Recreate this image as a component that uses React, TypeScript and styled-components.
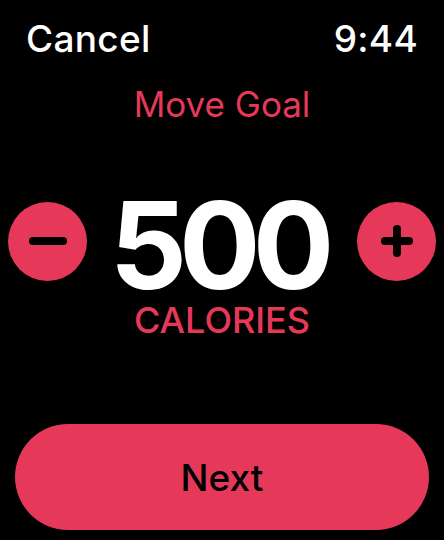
import styled, { createGlobalStyle } from "styled-components";

const accent = "#e6395a";

const GlobalStyle = createGlobalStyle`
  html, body {
    margin: 0;
    padding: 0;
    background: #000;
  }
  body {
    font-family: Inter, "Noto Sans", "Liberation Sans", sans-serif;
  }
`;

const Screen = styled.div`
  width: 444px;
  height: 540px;
  background: #000;
  display: flex;
  flex-direction: column;
  box-sizing: border-box;
  overflow: hidden;
`;

const Header = styled.div`
  display: flex;
  justify-content: space-between;
  align-items: baseline;
  padding: 20px 26px 0 26px;
  color: #fff;
  font-size: 37px;
  font-weight: 500;
  line-height: 1;
`;

const HeaderText = styled.span`
  letter-spacing: 0.3px;
`;

const Title = styled.div`
  margin-top: 30px;
  text-align: center;
  color: ${accent};
  font-size: 35px;
  font-weight: 400;
  line-height: 1;
`;

const Stepper = styled.div`
  margin-top: 73px;
  padding: 0 8px;
  display: flex;
  justify-content: space-between;
  align-items: center;
`;

const RoundButton = styled.button`
  width: 79px;
  height: 79px;
  border: none;
  border-radius: 50%;
  background: ${accent};
  padding: 0;
  display: flex;
  align-items: center;
  justify-content: center;
  margin-bottom: 8px;
  cursor: pointer;
`;

const Value = styled.div`
  color: #fff;
  font-size: 121px;
  font-weight: 700;
  line-height: 100px;
  letter-spacing: -8px;
  padding-right: 8px;
`;

const Unit = styled.div`
  margin-top: 7px;
  text-align: center;
  color: ${accent};
  font-size: 36px;
  font-weight: 500;
  line-height: 1;
`;

const NextButton = styled.button`
  margin: auto 15px 10px 15px;
  height: 106px;
  border: none;
  border-radius: 53px;
  background: ${accent};
  color: #000;
  font-family: inherit;
  font-size: 37px;
  font-weight: 500;
  line-height: 1;
  display: flex;
  align-items: center;
  justify-content: center;
  cursor: pointer;
`;

function MinusIcon() {
  return (
    <svg width="40" height="10" viewBox="0 0 40 10">
      <line x1="5" y1="5" x2="35" y2="5" stroke="#000" strokeWidth="8" strokeLinecap="round" />
    </svg>
  );
}

function PlusIcon() {
  return (
    <svg width="34" height="34" viewBox="0 0 34 34">
      <line x1="5" y1="17" x2="29" y2="17" stroke="#000" strokeWidth="8" strokeLinecap="round" />
      <line x1="17" y1="5" x2="17" y2="29" stroke="#000" strokeWidth="8" strokeLinecap="round" />
    </svg>
  );
}

export default function App() {
  return (
    <Screen>
      <GlobalStyle />
      <Header>
        <HeaderText>Cancel</HeaderText>
        <HeaderText>9:44</HeaderText>
      </Header>
      <Title>Move Goal</Title>
      <Stepper>
        <RoundButton aria-label="Decrease">
          <MinusIcon />
        </RoundButton>
        <Value>500</Value>
        <RoundButton aria-label="Increase">
          <PlusIcon />
        </RoundButton>
      </Stepper>
      <Unit>CALORIES</Unit>
      <NextButton>Next</NextButton>
    </Screen>
  );
}
